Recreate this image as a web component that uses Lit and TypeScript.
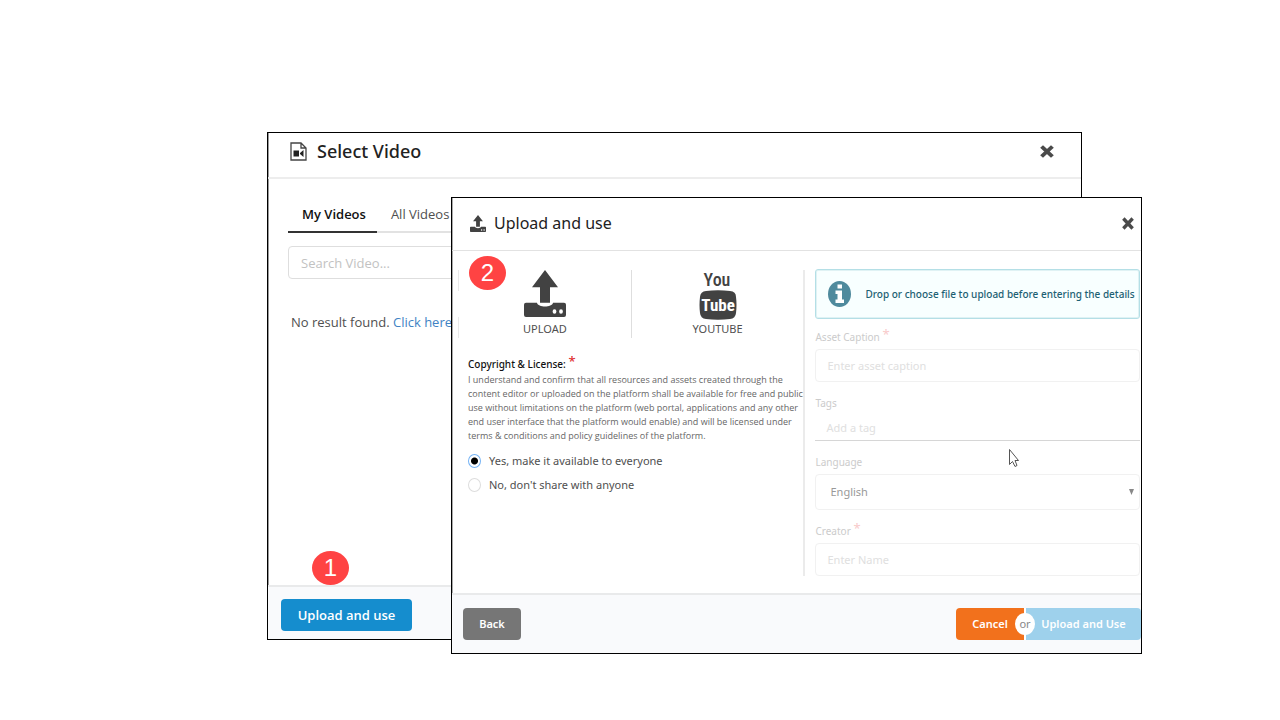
import { LitElement, html, css, svg } from "lit";
import { customElement, property, state } from "lit/decorators.js";
import { classMap } from "lit/directives/class-map.js";

const uploadIcon = svg`
  <path d="M21 0 34 17H26V32H16V17H8Z"/>
  <path d="M2 32H13C14 37 28 37 29 32H40Q42 32 42 34V44Q42 46 40 46H2Q0 46 0 44V34Q0 32 2 32ZM30.500 38.500A1.900 2.200 0 1 0 30.500 42.900 1.900 2.200 0 1 0 30.500 38.500ZM37 38.500A1.900 2.200 0 1 0 37 42.900 1.900 2.200 0 1 0 37 38.500Z" fill-rule="evenodd"/>`;

const closeIcon = (width: number) => html`<svg width=${width} height="13" viewBox="0 0 14 14" preserveAspectRatio="none" aria-hidden="true">
  <path d="M3 3 11 11M11 3 3 11" stroke="#4a4a4a" stroke-width="4" stroke-linecap="square" fill="none"/>
</svg>`;

@customElement("step-badge")
export class StepBadge extends LitElement {
  @property({ type: Number }) step = 1;

  static styles = css`
    :host {
      display: flex;
      align-items: center;
      justify-content: center;
      width: 37px;
      height: 34px;
      border-radius: 50%;
      background: #ff4343;
      color: #fff;
      font: 24px/34px "Liberation Sans", Arial, sans-serif;
    }
  `;

  render() {
    return html`${this.step}`;
  }
}

const shared = css`
  * {
    box-sizing: border-box;
  }
  :host {
    display: flex;
    flex-direction: column;
    border: 1px solid #000;
    background: #fff;
    color: #4f4f4f;
    font: 13px/20px "Open Sans", "Noto Sans", sans-serif;
  }
  button,
  input,
  select {
    font: inherit;
    margin: 0;
  }
  button {
    border: 0;
    padding: 0;
    background: none;
    color: inherit;
    cursor: pointer;
  }
  h2 {
    margin: 0;
    color: #222;
    font-family: "Noto Sans", sans-serif;
    font-weight: 500;
  }
  .header,
  .title {
    display: flex;
    align-items: center;
  }
  .header {
    justify-content: space-between;
  }
  .close {
    display: flex;
  }
  .footer {
    display: flex;
    align-items: center;
    background: #f9fafc;
    border-top: 2px solid #e9eaeb;
  }
  .btn {
    height: 32px;
    border-radius: 4px;
    color: #fff;
    font-weight: 600;
  }
`;

@customElement("select-video-window")
export class SelectVideoWindow extends LitElement {
  @state() private tab = "My Videos";

  static styles = [
    shared,
    css`
      :host {
        box-shadow: inset 1px 0 #999;
      }
      .header {
        height: 46px;
        padding: 0 27px 8px 22px;
        border-bottom: 2px solid #ededed;
      }
      .title {
        gap: 10px;
      }
      h2 {
        font-size: 18px;
        line-height: 24px;
      }
      .body {
        flex: 1;
        padding: 18px 20px;
      }
      .tabs {
        display: flex;
        border-bottom: 2px solid #e2e2e2;
      }
      .tab {
        height: 36px;
        padding: 0 11px 0 14px;
        margin-bottom: -2px;
        border-bottom: 2px solid transparent;
      }
      .tab.active {
        color: #111;
        font-weight: 600;
        border-color: #333;
      }
      .search {
        display: block;
        width: 100%;
        height: 33px;
        margin-top: 13px;
        padding: 0 12px;
        border: 1px solid #dedede;
        border-radius: 4px;
      }
      .search::placeholder {
        color: #c2c2c2;
        opacity: 1;
      }
      .empty {
        margin: 33px 3px 0;
      }
      a {
        color: #4183c4;
        text-decoration: none;
      }
      .footer {
        height: 54px;
        padding: 4px 13px 0;
      }
      .primary {
        width: 131px;
        background: #158dce;
      }
    `,
  ];

  render() {
    return html`
      <div class="header">
        <div class="title">
          <svg width="17" height="19" viewBox="0 0 17 19" aria-hidden="true">
            <path d="M1 1H11L16 6V18H1ZM11 1V6H16" fill="none" stroke="#444" stroke-width="1.300"/>
            <path d="M3.500 8.500H9V14.500H3.500ZM10 11 13.500 8V15L10 12Z" fill="#222"/>
          </svg>
          <h2>Select Video</h2>
        </div>
        <button class="close" aria-label="Close">${closeIcon(14)}</button>
      </div>
      <div class="body">
        <div class="tabs" role="tablist">
          ${["My Videos", "All Videos"].map(
            (name) => html`<button
              role="tab"
              aria-selected=${this.tab === name}
              class=${classMap({ tab: true, active: this.tab === name })}
              @click=${() => (this.tab = name)}
            >${name}</button>`
          )}
        </div>
        <input class="search" type="text" placeholder="Search Video..." aria-label="Search Video" />
        <p class="empty">No result found. <a href="#">Click here</a></p>
      </div>
      <div class="footer"><button class="btn primary">Upload and use</button></div>
    `;
  }
}

@customElement("upload-window")
export class UploadWindow extends LitElement {
  @state() private share = "yes";

  static styles = [
    shared,
    css`
      :host {
        font-family: "Noto Sans", sans-serif;
        font-size: 11px;
        line-height: 16px;
        box-shadow: inset 1px 0 #aaa;
      }
      .header {
        height: 53px;
        padding: 0 7px 2px 18px;
        border-bottom: 1px solid #e2e2e2;
      }
      .title {
        gap: 8px;
      }
      h2 {
        font-size: 16px;
        font-weight: 400;
        line-height: 24px;
      }
      .body {
        flex: 1;
        display: grid;
        grid-template-columns: minmax(0, 354fr) minmax(0, 335fr);
        padding: 19px 1px 17px 0;
      }
      .left {
        display: flex;
        flex-direction: column;
        border-right: 2px solid #ebebeb;
        padding-left: 6px;
      }
      .sources {
        display: grid;
        grid-template-columns: 1fr 1fr;
        height: 68px;
      }
      .source {
        display: flex;
        flex-direction: column;
        align-items: center;
        justify-content: space-between;
        border-left: 1px solid #dedede;
        line-height: 18px;
      }
      .source:first-child {
        border-image: linear-gradient(#e9e9e9 0 21px, transparent 21px 47px, #e9e9e9 47px) 1;
      }
      .glyph {
        fill: #424242;
      }
      .license {
        padding: 17px 0 0 10px;
      }
      .license h3 {
        margin: 0;
        color: #111;
        font-size: 10px;
        line-height: 18px;
        font-weight: 500;
      }
      .star {
        position: relative;
        top: -2px;
        color: #e03030;
        font-size: 13px;
        line-height: 10px;
      }
      .license p {
        margin: 0 -3px 10px 0;
        color: #666;
        font-family: "Open Sans", "Noto Sans", sans-serif;
        font-size: 9px;
        line-height: 14px;
      }
      .choice {
        display: flex;
        align-items: center;
        gap: 8px;
        height: 16px;
        margin-bottom: 8px;
      }
      .choice input {
        appearance: none;
        width: 13px;
        height: 14px;
        border: 1px solid #ddd;
        border-radius: 50%;
        background: #fff;
      }
      .choice input:checked {
        border-color: #75b3f5;
        background: radial-gradient(circle, #000 0 3px, #fff 4px);
      }
      .details {
        min-width: 0;
        margin: 0 0 0 10px;
        padding: 0;
        border: 0;
        color: #cbcbcb;
      }
      .notice {
        display: flex;
        align-items: center;
        gap: 14px;
        height: 50px;
        padding: 0 4px 0 12px;
        margin-top: -1px;
        border: 1px solid #b4dfe6;
        border-radius: 3px;
        background: #f8ffff;
        box-shadow: inset 0 0 0 1px #dff2f4;
        color: #1d6173;
        font-size: 10px;
        font-weight: 500;
      }
      .notice svg {
        flex: none;
      }
      .details label {
        display: block;
        height: 20px;
        font-size: 10px;
        line-height: 16px;
      }
      .details .star {
        color: #f8caca;
      }
      .field {
        margin-top: 13px;
      }
      .notice + .field {
        margin-top: 10px;
      }
      .field input,
      .field select {
        display: block;
        width: 100%;
        height: 33px;
        padding: 0 11px;
        border: 1px solid #f1f1f1;
        border-radius: 4px;
        background: #fff;
        opacity: 1;
      }
      .field input::placeholder {
        color: #e0e0e0;
        opacity: 1;
      }
      .field .tag {
        height: 26px;
        border: 0;
        border-bottom: 1px solid #d6d6d6;
        border-radius: 0;
      }
      .select {
        display: grid;
        align-items: center;
      }
      .select select {
        grid-area: 1 / 1;
        appearance: none;
        height: 36px;
        padding: 0 14px;
        color: #999;
      }
      .select svg {
        grid-area: 1 / 1;
        justify-self: end;
        margin-right: 6px;
        pointer-events: none;
      }
      .footer {
        justify-content: space-between;
        height: 60px;
        padding: 0 0 1px 11px;
      }
      .back {
        width: 58px;
        background: #767676;
      }
      .actions {
        display: flex;
        gap: 2px;
        position: relative;
        background: linear-gradient(#fff, #fff) 68px 0 / 2px 100% no-repeat;
      }
      .cancel {
        width: 68px;
        border-radius: 4px 0 0 4px;
        background: #f2711c;
      }
      .confirm {
        width: 115px;
        border-radius: 0 4px 4px 0;
        background: #9ed1ec;
      }
      .or {
        position: absolute;
        left: 59px;
        top: 5px;
        width: 20px;
        height: 22px;
        border-radius: 50%;
        background: #fff;
        color: #888;
        line-height: 21px;
        text-align: center;
      }
      .logo {
        font-family: "Roboto Condensed", Roboto, sans-serif;
        font-weight: 700;
        font-size: 17px;
        text-anchor: middle;
      }
      .upper {
        font-size: 18px;
        font-weight: 500;
      }
    `,
  ];

  private choice(value: string, text: string) {
    return html`<div class="choice">
      <input id=${value} type="radio" name="share" .checked=${this.share === value}
        @change=${() => (this.share = value)} />
      <label for=${value}>${text}</label>
    </div>`;
  }

  render() {
    const star = html`<span class="star">*</span>`;
    return html`
      <div class="header">
        <div class="title">
          <svg class="glyph" width="16" height="17" viewBox="0 0 42 46" preserveAspectRatio="none" aria-hidden="true">${uploadIcon}</svg>
          <h2>Upload and use</h2>
        </div>
        <button class="close" aria-label="Close">${closeIcon(12)}</button>
      </div>
      <div class="body">
        <div class="left">
          <div class="sources">
            <button class="source">
              <svg class="glyph" width="42" height="47" viewBox="0 0 42 46" preserveAspectRatio="none" aria-hidden="true">${uploadIcon}</svg>
              UPLOAD
            </button>
            <button class="source">
              <svg class="glyph" width="38" height="50" viewBox="0 0 38 50" aria-hidden="true">
                <text class="logo upper" x="18" y="16">You</text>
                <path d="M7 21Q19 19.500 31 21Q37 21.500 37 27Q38 35 37 43Q36.500 48.500 31 49Q19 50.500 7 49Q1.500 48.500 1 43Q0 35 1 27Q1.500 21.500 7 21Z"/>
                <text class="logo" x="19" y="41" fill="#fff">Tube</text>
              </svg>
              YOUTUBE
            </button>
          </div>
          <div class="license">
            <h3>Copyright &amp; License: ${star}</h3>
            <p>I understand and confirm that all resources and assets created through the content editor or uploaded on the platform shall be available for free and public use without limitations on the platform (web portal, applications and any other end user interface that the platform would enable) and will be licensed under terms &amp; conditions and policy guidelines of the platform.</p>
            ${this.choice("yes", "Yes, make it available to everyone")}
            ${this.choice("no", "No, don't share with anyone")}
          </div>
        </div>
        <fieldset class="details" disabled>
          <div class="notice">
            <svg width="23" height="26" viewBox="0 0 23 26" aria-hidden="true">
              <ellipse cx="11.500" cy="13" rx="11.500" ry="13" fill="#4f8a9d"/>
              <path d="M9.500 3.500H14V7.500H9.500ZM7.500 9.500H14V18.500H16V22H7.500V18.500H9.500V13H7.500Z" fill="#fff"/>
            </svg>
            <span>Drop or choose file to upload before entering the details</span>
          </div>
          <div class="field">
            <label for="caption">Asset Caption ${star}</label>
            <input id="caption" type="text" placeholder="Enter asset caption" />
          </div>
          <div class="field">
            <label for="tags">Tags</label>
            <input id="tags" class="tag" type="text" placeholder="Add a tag" />
          </div>
          <div class="field">
            <label for="language">Language</label>
            <div class="select">
              <select id="language"><option>English</option></select>
              <svg width="5" height="6" viewBox="0 0 5 6" aria-hidden="true"><path d="M0 0H5L2.500 6Z" fill="#888"/></svg>
            </div>
          </div>
          <div class="field">
            <label for="creator">Creator ${star}</label>
            <input id="creator" type="text" placeholder="Enter Name" />
          </div>
        </fieldset>
      </div>
      <div class="footer">
        <button class="btn back">Back</button>
        <div class="actions">
          <button class="btn cancel">Cancel</button>
          <button class="btn confirm">Upload and Use</button>
          <span class="or">or</span>
        </div>
      </div>
    `;
  }
}

@customElement("app-root")
export class AppRoot extends LitElement {
  static styles = css`
    :host {
      display: block;
      position: relative;
      min-height: 100vh;
      overflow: hidden;
      background: #fff;
    }
    .select-window {
      position: absolute;
      left: 267px;
      right: 198px;
      top: 132px;
      min-height: 508px;
      box-sizing: border-box;
    }
    .upload-window {
      position: absolute;
      left: 451px;
      right: 138px;
      top: 197px;
      min-height: 457px;
      box-sizing: border-box;
    }
    .one,
    .two,
    .pointer {
      position: absolute;
    }
    .one {
      left: 312px;
      top: 551px;
    }
    .two {
      left: 469px;
      top: 256px;
    }
    .pointer {
      left: 1008px;
      top: 448px;
    }
  `;

  render() {
    return html`
      <select-video-window class="select-window"></select-video-window>
      <upload-window class="upload-window"></upload-window>
      <step-badge class="one" .step=${1}></step-badge>
      <step-badge class="two" .step=${2}></step-badge>
      <svg class="pointer" width="12" height="20" viewBox="0 0 12 20" aria-hidden="true">
        <path d="M1.500 1.500V16.500L4.500 13.500L7 18.500L9 17.500L7 12.500H10.500Z" fill="#fff" stroke="#555" stroke-width="1"/>
      </svg>
    `;
  }
}
